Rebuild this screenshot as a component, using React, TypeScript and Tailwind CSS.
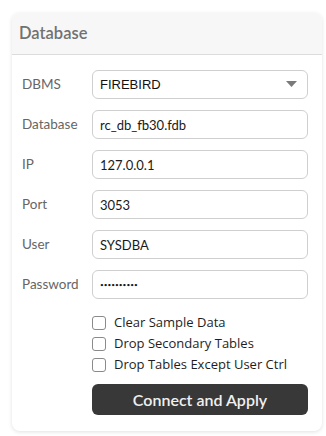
import React from 'react';

const fields = [
  { label: 'Database', value: 'rc_db_fb30.fdb', type: 'text' },
  { label: 'IP', value: '127.0.0.1', type: 'text' },
  { label: 'Port', value: '3053', type: 'text' },
  { label: 'User', value: 'SYSDBA', type: 'text' },
  { label: 'Password', value: 'masterkey1', type: 'password' },
];

const options = ['Clear Sample Data', 'Drop Secondary Tables', 'Drop Tables Except User Ctrl'];

export default function App() {
  return (
    <div className="bg-white w-[326px] h-[436px] pt-[13px] pl-[12px] pr-[4px]" style={{ fontFamily: 'Lato, "Noto Sans", sans-serif' }}>
      <div className="rounded-lg bg-white shadow-[0_1px_4px_rgba(0,0,0,0.12)] overflow-hidden">
        {/* Header */}
        <div className="h-[42px] bg-[#f7f7f7] border-b border-[#dcdcdc] flex items-center px-[7px]">
          <span className="text-[16.5px] font-semibold text-[#717171]">Database</span>
        </div>

        {/* Form */}
        <div className="pt-[15px] pb-[16px] pl-[10px] pr-[14px]">
          <div className="flex flex-col gap-[11px]">
            <div className="flex items-center">
              <span className="w-[70px] text-[13.5px] text-[#666666]">DBMS</span>
              <div className="flex-1 h-[29px] border border-[#cfcfcf] rounded-md flex items-center justify-between pl-[7px] pr-[10px]">
                <span className="text-[13px] text-[#111]" style={{ fontFamily: '"Liberation Sans", Arial, sans-serif' }}>FIREBIRD</span>
                <svg width="11" height="7" viewBox="0 0 11 7">
                  <path d="M0 0 L11 0 L5.5 6 Z" fill="#7a7a7a" />
                </svg>
              </div>
            </div>
            {fields.map((f) => (
              <div key={f.label} className="flex items-center">
                <span className="w-[70px] text-[13.5px] text-[#666666]">{f.label}</span>
                <input
                  readOnly
                  type={f.type}
                  value={f.value}
                  className={`flex-1 min-w-0 h-[29px] border border-[#cfcfcf] rounded-md px-[7px] text-[#1a1a1a] outline-none ${
                    f.type === 'password' ? 'text-[6.5px]' : 'text-[13px]'
                  }`}
                />
              </div>
            ))}
          </div>

          <div className="pl-[70px] pt-[13px] flex flex-col" style={{ fontFamily: '"Open Sans", "Noto Sans", sans-serif' }}>
            {options.map((o) => (
              <label key={o} className="flex items-center h-[21px] gap-[8px]">
                <span className="w-[14px] h-[14px] rounded-[3px] border border-[#8a8a8a] bg-white" />
                <span className="text-[13px] text-[#1e1e1e]">{o}</span>
              </label>
            ))}
          </div>

          <div className="pl-[70px] pt-[9px]">
            <button className="w-full h-[31px] rounded-md bg-[#383838] text-[#f0f0f0] text-[16px] font-semibold">
              Connect and Apply
            </button>
          </div>
        </div>
      </div>
    </div>
  );
}
